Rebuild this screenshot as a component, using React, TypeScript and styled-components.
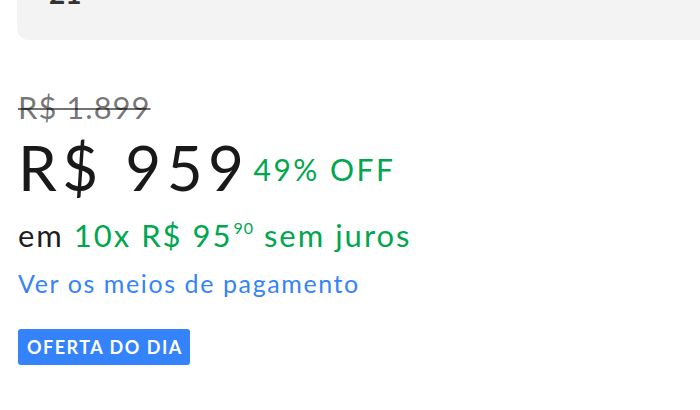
import React from "react";
import styled, { createGlobalStyle } from "styled-components";

const Global = createGlobalStyle`
  html, body { margin: 0; padding: 0; background: #fff; }
  body { font-family: Lato, "Open Sans", Arial, sans-serif; -webkit-font-smoothing: antialiased; }
`;

const Page = styled.div`
  width: 700px;
  height: 410px;
  overflow: hidden;
  background: #fff;
  display: flex;
  flex-direction: column;
`;

const TopCard = styled.div`
  margin-left: 17px;
  margin-top: -40px;
  height: 80px;
  background: #f3f3f3;
  border-bottom-left-radius: 12px;
  display: flex;
  align-items: flex-end;
  padding: 0 0 33px 32px;
  box-sizing: border-box;
`;

const CardValue = styled.span`
  font-size: 28px;
  font-weight: 700;
  line-height: 1;
  color: #333;
`;

const PriceBlock = styled.div`
  padding: 50px 0 0 18px;
  display: flex;
  flex-direction: column;
`;

const OldPrice = styled.s`
  font-size: 31px;
  line-height: 34px;
  letter-spacing: 1px;
  color: rgba(0, 0, 0, 0.55);
  text-decoration-thickness: 2px;
`;

const MainRow = styled.div`
  display: flex;
  align-items: center;
  gap: 4px;
  margin-top: 11px;
`;

const MainPrice = styled.span`
  font-size: 62px;
  font-weight: 400;
  line-height: 64px;
  letter-spacing: 5.5px;
  color: rgba(0, 0, 0, 0.9);
`;

const Discount = styled.span`
  font-size: 30px;
  letter-spacing: 2.5px;
  color: #00a650;
  padding-top: 4px;
`;

const Installments = styled.div`
  font-size: 31px;
  line-height: 36px;
  letter-spacing: 2px;
  color: rgba(0, 0, 0, 0.9);
  margin-top: 18px;
`;

const Green = styled.span`
  color: #00a650;
`;

const Cents = styled.sup`
  font-size: 16px;
  vertical-align: 13px;
  line-height: 0;
  letter-spacing: 1px;
  margin-left: 1px;
`;

const PayLink = styled.a`
  font-size: 25px;
  line-height: 30px;
  letter-spacing: 1.6px;
  color: #3483fa;
  text-decoration: none;
  margin-top: 15px;
`;

const Badge = styled.span`
  align-self: flex-start;
  margin-top: 31px;
  background: #3483fa;
  color: #fff;
  font-size: 18px;
  font-weight: 700;
  line-height: 36px;
  letter-spacing: 1.5px;
  padding: 0 7px 0 9px;
  border-radius: 3px;
`;

export default function App() {
  return (
    <Page>
      <Global />
      <TopCard>
        <CardValue>21</CardValue>
      </TopCard>
      <PriceBlock>
        <OldPrice>R$ 1.899</OldPrice>
        <MainRow>
          <MainPrice>R$ 959</MainPrice>
          <Discount>49% OFF</Discount>
        </MainRow>
        <Installments>
          em <Green>10x R$ 95<Cents>90</Cents> sem juros</Green>
        </Installments>
        <PayLink href="#">Ver os meios de pagamento</PayLink>
        <Badge>OFERTA DO DIA</Badge>
      </PriceBlock>
    </Page>
  );
}
